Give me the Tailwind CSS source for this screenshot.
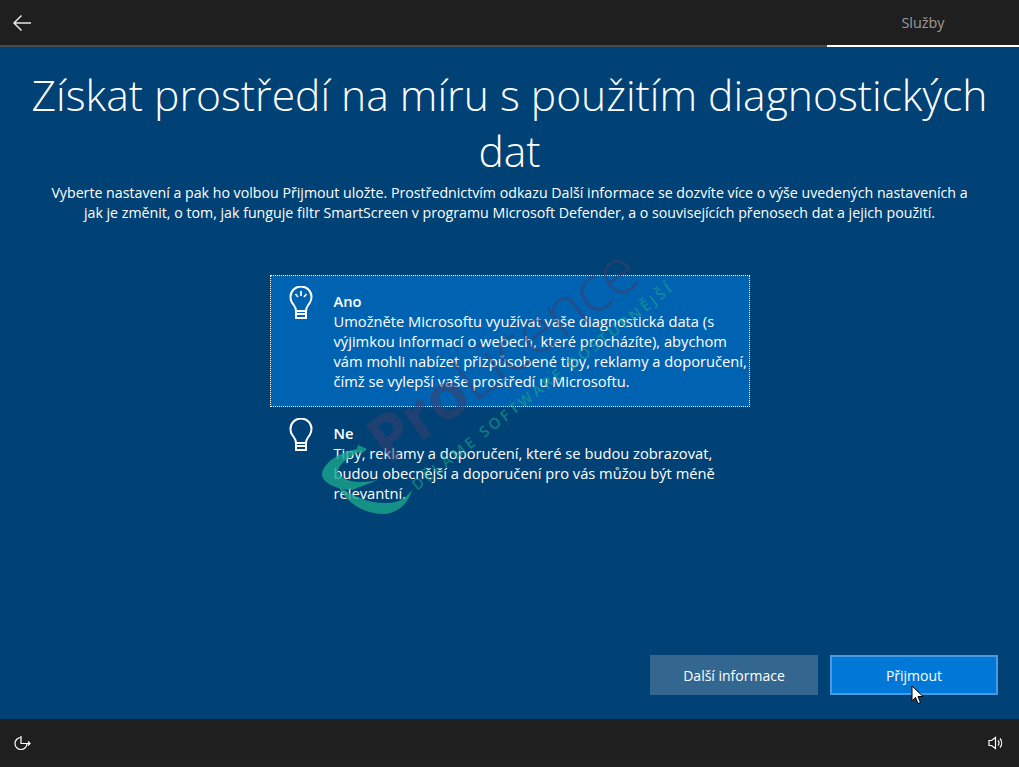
<!DOCTYPE html>
<html lang="cs">

<head>
    <meta charset="UTF-8">
    <title>Služby</title>
    <script src="https://cdn.jsdelivr.net/npm/@tailwindcss/browser@4"></script>
</head>

<body class="font-['Open_Sans',sans-serif] text-white bg-[#004275]">
    <div class="w-[1019px] h-[767px] flex flex-col relative overflow-hidden">

        <!-- Top bar -->
        <div class="h-[47px] shrink-0 bg-[#1f1f1f] flex justify-between border-b-2 border-[#4a4a4a]">
            <div class="w-[44px] flex items-center justify-center">
                <svg width="20" height="18" viewBox="0 0 20 18" fill="none" stroke="#e6e6e6" stroke-width="1.5">
                    <path d="M19 9H2M9.500 1.500 2 9l7.500 7.500" />
                </svg>
            </div>
            <div class="w-[192px] h-[47px] border-b-2 border-white flex items-center justify-center text-[14.400px] text-[#9a9a9a]">
                Služby
            </div>
        </div>

        <!-- Main -->
        <div class="flex-1 flex flex-col items-center">
            <h1 class="mt-[19px] text-[42.600px] leading-[56px] font-light text-center whitespace-nowrap">Získat prostředí na míru s použitím diagnostických<br>dat</h1>
            <p class="mt-[5px] text-[14.200px] leading-[20px] text-center whitespace-nowrap">Vyberte nastavení a pak ho volbou Přijmout uložte. Prostřednictvím odkazu Další informace se dozvíte více o výše uvedených nastaveních a<br>jak je změnit, o tom, jak funguje filtr SmartScreen v programu Microsoft Defender, a o souvisejících přenosech dat a jejich použití.</p>

            <div class="mt-[52px] w-[480px] flex flex-col gap-[5px]">
                <div class="bg-[#0063b1] border border-dotted border-white h-[132px] flex pl-[14px]">
                    <svg class="mt-[10px] shrink-0" width="32" height="34" viewBox="0 0 32 34" fill="none" stroke="white" stroke-width="2">
                        <path d="M11 25c0-4-2-5.500-3.700-8A10 10 0 0 1 5.500 11 10.500 10.500 0 0 1 26.500 11c0 2.300-.8 4.200-1.800 6-1.700 2.500-3.700 4-3.700 8zM11 25v7h10v-7M11 28h10" />
                        <path d="M16 5v5M10.500 8l2.500 3M21.500 8 19 11" stroke-width="1.700" />
                    </svg>
                    <div class="ml-[17px] pt-[15px] text-[14.700px] leading-[20px] whitespace-nowrap">
                        <p class="font-semibold">Ano</p>
                        <p>Umožněte Microsoftu využívat vaše diagnostická data (s<br>výjimkou informací o webech, které procházíte), abychom<br>vám mohli nabízet přizpůsobené tipy, reklamy a doporučení,<br>čímž se vylepší vaše prostředí u Microsoftu.</p>
                    </div>
                </div>
                <div class="flex pl-[15px]">
                    <svg class="mt-[6px] shrink-0" width="32" height="34" viewBox="0 0 32 34" fill="none" stroke="white" stroke-width="2">
                        <path d="M11 25c0-4-2-5.500-3.700-8A10 10 0 0 1 5.500 11 10.500 10.500 0 0 1 26.500 11c0 2.300-.8 4.200-1.800 6-1.700 2.500-3.700 4-3.700 8zM11 25v7h10v-7M11 28h10" />
                    </svg>
                    <div class="ml-[17px] pt-[11px] text-[14.700px] leading-[20px] whitespace-nowrap">
                        <p class="font-semibold">Ne</p>
                        <p>Tipy, reklamy a doporučení, které se budou zobrazovat,<br>budou obecnější a doporučení pro vás můžou být méně<br>relevantní.</p>
                    </div>
                </div>
            </div>

            <div class="mt-auto mb-[24px] self-end mr-[21px] flex gap-[12px] text-[14px]">
                <button class="w-[168px] h-[40px] bg-[#33678f]">Další informace</button>
                <button class="w-[168px] h-[40px] bg-[#0078d7] border-2 border-[#4a9ae3]">Přijmout</button>
            </div>
        </div>

        <!-- Bottom bar -->
        <div class="h-[48px] shrink-0 bg-[#1f1f1f] flex items-center justify-between pl-[14px] pr-[16px]">
            <svg width="18" height="16" viewBox="0 0 18 16" fill="none" stroke="white" stroke-width="1.200">
                <path d="M7 2.500A6 6 0 1 0 13 8.500M7 1v7.500h9M14 6.500l2 2-2 2" />
            </svg>
            <svg width="15" height="14" viewBox="0 0 15 14" fill="none" stroke="white" stroke-width="1.200">
                <path d="M1 4.500h2.500L7.500 1.500v11l-4-3H1zM10 4.500a3.500 3.500 0 0 1 0 5M12 2.500a7 7 0 0 1 0 9" />
            </svg>
        </div>

        <!-- Watermark -->
        <div class="absolute inset-0 pointer-events-none">
            <svg width="1019" height="767" viewBox="0 0 1019 767">
                <g fill="#1aa58c" fill-opacity=".8">
                    <path d="M358 445l9 4-6 5-2-2c-13 6-24 16-20 22 5 8 21 10 39 6l-26 10c-12 0-30-6-30-16 2-12 18-22 35-25z" />
                    <path d="M338 486c10 19 27 28 47 28 15-2 23-11 27-24-6 8-14 13-24 13-18 1-36-7-50-17z" />
                </g>
                <text transform="translate(388 466) rotate(-36)" font-family="Open Sans" font-size="64" letter-spacing="-1" fill="#3a3f6e" fill-opacity=".55"><tspan font-weight="700">Pro</tspan><tspan font-weight="300">Licence</tspan></text>
                <text transform="translate(417 491) rotate(-38)" font-family="Open Sans" font-size="15" font-weight="600" textLength="325" fill="#1aa58c" fill-opacity=".6">DĚLÁME SOFTWARE DOSTUPNĚJŠÍ</text>
            </svg>
        </div>

        <!-- Cursor -->
        <svg class="absolute left-[911px] top-[685px]" width="14" height="21" viewBox="0 0 14 21">
            <path d="M1 1v15l3.500-3.500 2.500 6 2.500-1-2.500-6H12z" fill="white" stroke="black" stroke-width="1" />
        </svg>
    </div>
</body>

</html>
